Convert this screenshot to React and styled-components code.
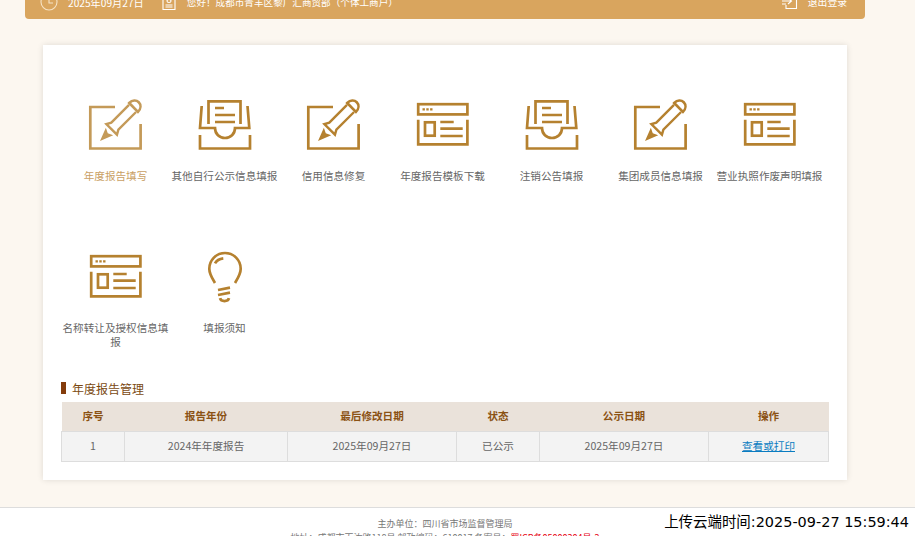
import React from "react";
import styled, { createGlobalStyle } from "styled-components";

const Global = createGlobalStyle`
  html, body { margin: 0; padding: 0; background: #fcf7f0; }
  body { font-family: "Noto Sans CJK SC", "Liberation Sans", sans-serif; }
`;

const Page = styled.div`
  position: relative;
  display: flex;
  flex-direction: column;
  width: 915px;
  height: 536px;
  overflow: hidden;
  background: #fcf7f0;
`;

const TopBar = styled.header`
  display: flex;
  align-items: center;
  justify-content: space-between;
  box-sizing: border-box;
  flex: none;
  width: 840px;
  height: 34px;
  margin: -15px 0 0 25px;
  padding: 0 18px 0 15px;
  background: #d9a55e;
  border-radius: 0 0 4px 4px;
  color: #fff;
  font-size: 10.2px;
`;

const BarGroup = styled.div`
  display: flex;
  align-items: center;
`;

const BarText = styled.span`
  margin-left: ${(p) => p.$gap}px;
  font-size: ${(p) => p.$size || 10.2}px;
  white-space: nowrap;
`;

const Card = styled.main`
  box-sizing: border-box;
  flex: none;
  width: 804px;
  height: 435px;
  margin: 26px 0 0 43px;
  padding: 53px 18px 0;
  background: #fff;
  box-shadow: 0 0 6px rgba(0, 0, 0, 0.12);
`;

const MenuGrid = styled.nav`
  display: grid;
  grid-template-columns: repeat(7, 109px);
  row-gap: 67px;
`;

const MenuItem = styled.a`
  display: flex;
  flex-direction: column;
  align-items: center;
  color: ${(p) => (p.$active ? "#c9a064" : "#666")};
  font-size: 10.6px;
  line-height: 14px;
  text-align: center;
`;

const IconSlot = styled.svg`
  display: block;
  width: 60px;
  height: 56px;
  margin: 0 1px 15px 0;
  fill: none;
  stroke: ${(p) => (p.$active ? "#c49a58" : "#b5812f")};
  color: ${(p) => (p.$active ? "#c49a58" : "#b5812f")};
  stroke-width: 2.7;
`;

const MenuLabel = styled.span`
  display: block;
  width: 108px;
`;

const SectionTitle = styled.h2`
  display: flex;
  align-items: center;
  height: 16px;
  margin: 31px 0 6px;
  color: #7b4a12;
  font-size: 12px;
  font-weight: 400;
  &::before {
    content: "";
    width: 5px;
    height: 12px;
    margin-right: 6px;
    background: #843c0c;
  }
`;

const Table = styled.table`
  width: 767px;
  border-collapse: collapse;
  table-layout: fixed;
  font-size: 10.6px;
  text-align: center;
`;

const HeadCell = styled.th`
  box-sizing: border-box;
  height: 29px;
  padding: 0 0 1px;
  background: #eae2da;
  color: #8b5214;
  font-weight: 700;
`;

const Cell = styled.td`
  box-sizing: border-box;
  height: 30px;
  padding: 0 0 1px;
  background: #f3f3f3;
  border: 1px solid #ddd;
  color: #666;
`;

const ActionLink = styled.a`
  color: #0a7cc1;
  text-decoration: underline;
`;

const Footer = styled.footer`
  flex: 1;
  margin-top: 27px;
  padding: 9px 25px 0 0;
  background: #fff;
  border-top: 1px solid #ddd;
  color: #777;
  font-size: 9px;
  line-height: 14px;
  text-align: center;
`;

const Red = styled.span`
  color: #e60012;
`;

const Stamp = styled.div`
  position: absolute;
  right: 6px;
  top: 513px;
  color: #000;
  font-family: "DejaVu Sans", "Noto Sans CJK SC", sans-serif;
  font-size: 14.45px;
  line-height: 18px;
  white-space: nowrap;
`;

const PencilIcon = ({ active }) => (
  <IconSlot $active={active} viewBox="0 0 60 56">
    <path d="M30 9H5.3V50.5H55.6V26" />
    <g transform="translate(15 43) rotate(-45)">
      <path d="M0 0L13.5 -5.2L11 0L13.5 5.2Z" fill="currentColor" stroke="none" />
      <path d="M46 -5H21L16.5 -7.5V7.5L21 5H46" strokeWidth="2.4" />
      <path d="M47.5 -6.2V6.2C52 6.2 54.8 3.4 54.8 0C54.8 -3.4 52 -6.2 47.5 -6.2Z" strokeWidth="2.6" />
    </g>
  </IconSlot>
);

const InboxIcon = () => (
  <IconSlot viewBox="0 0 60 56">
    <path d="M14.5 26V3.3H46.5V26" />
    <path d="M21 10H30M21 17H41M21 24H41" />
    <path d="M7.7 8L6 30H21C21 36 25.5 40 31 40C36.5 40 41 36 41 30H55.3L53.5 8" />
    <path d="M6 37V50.5H56V37" />
  </IconSlot>
);

const WindowIcon = () => (
  <IconSlot viewBox="0 0 60 56">
    <rect x="6.2" y="6.2" width="49.2" height="10.2" />
    <path d="M10.5 11.4H20.5" strokeDasharray="2.4 1.4" strokeWidth="2.4" />
    <path d="M6.2 21.7V46.4H55.4V21.7" />
    <rect x="13" y="24.3" width="9.7" height="13.4" />
    <path d="M28.3 24H41.7M28.3 30.7H50.7M28.3 38H50.7" />
  </IconSlot>
);

const BulbIcon = () => (
  <IconSlot viewBox="0 0 60 56">
    <path d="M21 33C18 28 15.3 24 15.3 18.7A15.7 15.7 0 0 1 46.7 18.7C46.7 24 44 28 41 33" />
    <path d="M21 13.3C22.5 10.5 25.5 8.8 29.3 8.3" />
    <path d="M24 40L36 37.7M24 45L36 42.7" />
    <path d="M26 48.2C27 52 34 52 35 48.2" />
  </IconSlot>
);

const items = [
  { label: "年度报告填写", Icon: PencilIcon, active: true },
  { label: "其他自行公示信息填报", Icon: InboxIcon },
  { label: "信用信息修复", Icon: PencilIcon },
  { label: "年度报告模板下载", Icon: WindowIcon },
  { label: "注销公告填报", Icon: InboxIcon },
  { label: "集团成员信息填报", Icon: PencilIcon },
  { label: "营业执照作废声明填报", Icon: WindowIcon },
  { label: "名称转让及授权信息填报", Icon: WindowIcon },
  { label: "填报须知", Icon: BulbIcon },
];

const columns = [
  ["序号", 63],
  ["报告年份", 163],
  ["最后修改日期", 169],
  ["状态", 83],
  ["公示日期", 169],
  ["操作", 120],
];

const BarSvg = styled.svg`
  display: block;
  fill: none;
  stroke: #fff;
  stroke-width: 1.1;
`;

const greeting = "您好\uFF01成都市青羊区黎广汇商贸部\uFF08个体工商户\uFF09";
const sponsor = "主办单位\uFF1A四川省市场监督管理局";
const address = "地址\uFF1A成都市百汝路118号 邮政编码\uFF1A610017 备案号\uFF1A";

export default function App() {
  return (
    <Page>
      <Global />
      <TopBar>
        <BarGroup>
          <BarSvg width="18" height="18" viewBox="0 0 18 18">
            <circle cx="9" cy="9" r="8" stroke="#f6e3c5" />
            <path d="M9 4V10H13" stroke="#f6e3c5" />
          </BarSvg>
          <BarText $gap={10}>2025年09月27日</BarText>
          <BarText $gap={18}>
            <BarSvg width="14" height="18" viewBox="0 0 14 18">
              <path d="M1 4H13V16.5H1Z" />
              <path d="M3.5 14H10.5M3.5 12H10.5M5 8C5 6 9 6 9 8C9 10 5 10 5 8Z" />
            </BarSvg>
          </BarText>
          <BarText $gap={11} $size={9.6}>{greeting}</BarText>
        </BarGroup>
        <BarGroup>
          <BarSvg width="16" height="18" viewBox="0 0 16 18">
            <path d="M4 5V1H14.5V15.5H4V12" />
            <path d="M0 8H9M6 5L9.5 8L6 11M0 5H4M0 11H4" />
          </BarSvg>
          <BarText $gap={10} $size={9.8}>退出登录</BarText>
        </BarGroup>
      </TopBar>

      <Card>
        <MenuGrid>
          {items.map(({ label, Icon, active }) => (
            <MenuItem key={label} $active={active}>
              <Icon active={active} />
              <MenuLabel>{label}</MenuLabel>
            </MenuItem>
          ))}
        </MenuGrid>

        <SectionTitle>年度报告管理</SectionTitle>
        <Table>
          <colgroup>
            {columns.map(([name, width]) => (
              <col key={name} width={width} />
            ))}
          </colgroup>
          <thead>
            <tr>
              {columns.map(([name]) => (
                <HeadCell key={name}>{name}</HeadCell>
              ))}
            </tr>
          </thead>
          <tbody>
            <tr>
              <Cell>1</Cell>
              <Cell>2024年年度报告</Cell>
              <Cell>2025年09月27日</Cell>
              <Cell>已公示</Cell>
              <Cell>2025年09月27日</Cell>
              <Cell>
                <ActionLink>查看或打印</ActionLink>
              </Cell>
            </tr>
          </tbody>
        </Table>
      </Card>

      <Footer>
        <div>{sponsor}</div>
        <div>
          {address}<Red>蜀ICP备05000304号-2</Red>
        </div>
      </Footer>

      <Stamp>上传云端时间:2025-09-27 15:59:44</Stamp>
    </Page>
  );
}
